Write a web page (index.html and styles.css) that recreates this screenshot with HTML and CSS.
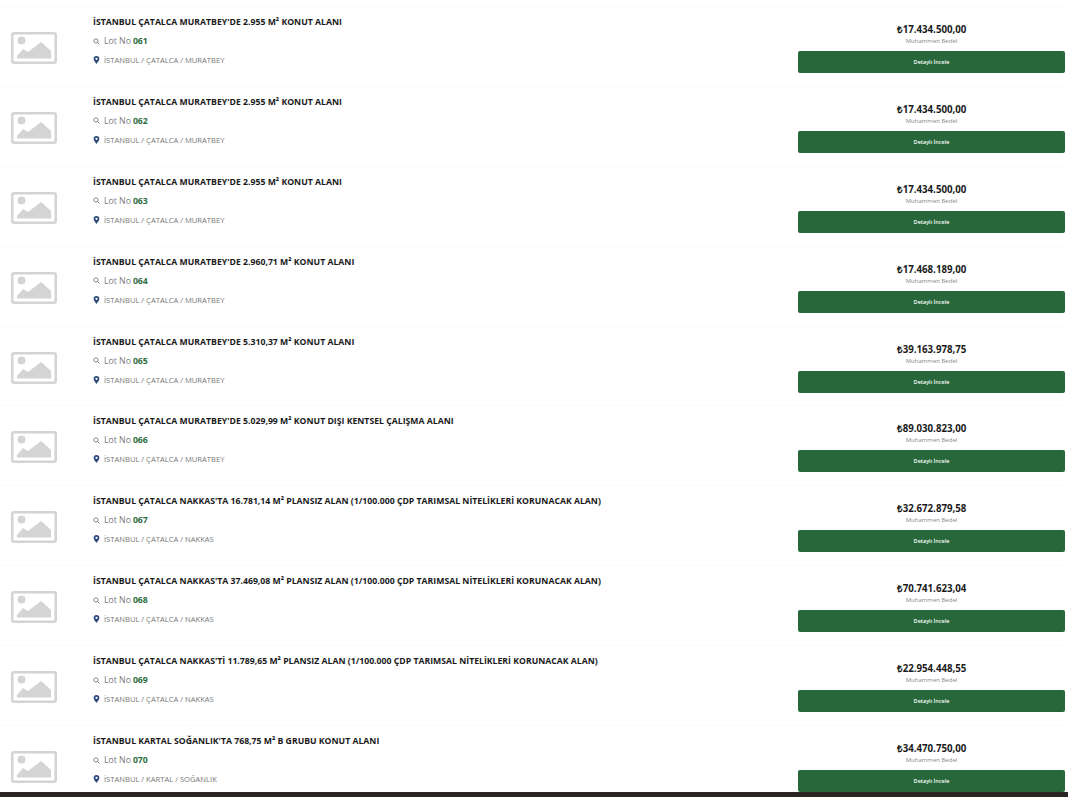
FILE: index.html
```html
<!DOCTYPE html>
<html lang="tr">

<head>
    <meta charset="utf-8">
    <title>Lot Listesi</title>
    <link rel="stylesheet" href="styles.css">
</head>

<body>
    <svg class="defs" width="0" height="0">
        <symbol id="noimg" viewBox="0 0 46 32">
            <rect x="1.250" y="1.250" width="43.500" height="29.500" rx="2" fill="#fff" stroke="#d4d4d4" stroke-width="2.500"/>
            <circle cx="10.500" cy="8.500" r="4" fill="#d4d4d4"/>
            <path d="M6 26.500v-2.500l6-7 5 3 13-10 10 9v7.500z" fill="#d4d4d4"/>
        </symbol>
        <symbol id="lens" viewBox="0 0 10 10">
            <circle cx="4.200" cy="4.200" r="3" fill="none" stroke="#6f6c86" stroke-width="1.200"/>
            <path d="M6.500 6.500L9 9" stroke="#6f6c86" stroke-width="1.400"/>
        </symbol>
        <symbol id="pin" viewBox="0 0 10 12">
            <path fill-rule="evenodd" d="M5 0a4.300 4.300 0 0 0-4.300 4.300C.7 7.300 5 12 5 12s4.300-4.700 4.300-7.700A4.300 4.300 0 0 0 5 0zm0 6a1.700 1.700 0 1 1 0-3.400A1.700 1.700 0 0 1 5 6z" fill="#2d4a7c"/>
        </symbol>
    </svg>

    <div class="lot-list">

        <div class="lot">
            <div class="thumb"><svg><use href="#noimg"/></svg></div>
            <div class="info">
                <h4>İSTANBUL ÇATALCA MURATBEY'DE 2.955 M² KONUT ALANI</h4>
                <p class="lot-no"><svg><use href="#lens"/></svg> Lot No <b>061</b></p>
                <p class="place"><svg><use href="#pin"/></svg> İSTANBUL / ÇATALCA / MURATBEY</p>
            </div>
            <div class="price">
                <strong>₺17.434.500,00</strong>
                <span>Muhammen Bedel</span>
                <a href="#">Detaylı İncele</a>
            </div>
        </div>

        <div class="lot">
            <div class="thumb"><svg><use href="#noimg"/></svg></div>
            <div class="info">
                <h4>İSTANBUL ÇATALCA MURATBEY'DE 2.955 M² KONUT ALANI</h4>
                <p class="lot-no"><svg><use href="#lens"/></svg> Lot No <b>062</b></p>
                <p class="place"><svg><use href="#pin"/></svg> İSTANBUL / ÇATALCA / MURATBEY</p>
            </div>
            <div class="price">
                <strong>₺17.434.500,00</strong>
                <span>Muhammen Bedel</span>
                <a href="#">Detaylı İncele</a>
            </div>
        </div>

        <div class="lot">
            <div class="thumb"><svg><use href="#noimg"/></svg></div>
            <div class="info">
                <h4>İSTANBUL ÇATALCA MURATBEY'DE 2.955 M² KONUT ALANI</h4>
                <p class="lot-no"><svg><use href="#lens"/></svg> Lot No <b>063</b></p>
                <p class="place"><svg><use href="#pin"/></svg> İSTANBUL / ÇATALCA / MURATBEY</p>
            </div>
            <div class="price">
                <strong>₺17.434.500,00</strong>
                <span>Muhammen Bedel</span>
                <a href="#">Detaylı İncele</a>
            </div>
        </div>

        <div class="lot">
            <div class="thumb"><svg><use href="#noimg"/></svg></div>
            <div class="info">
                <h4>İSTANBUL ÇATALCA MURATBEY'DE 2.960,71 M² KONUT ALANI</h4>
                <p class="lot-no"><svg><use href="#lens"/></svg> Lot No <b>064</b></p>
                <p class="place"><svg><use href="#pin"/></svg> İSTANBUL / ÇATALCA / MURATBEY</p>
            </div>
            <div class="price">
                <strong>₺17.468.189,00</strong>
                <span>Muhammen Bedel</span>
                <a href="#">Detaylı İncele</a>
            </div>
        </div>

        <div class="lot">
            <div class="thumb"><svg><use href="#noimg"/></svg></div>
            <div class="info">
                <h4>İSTANBUL ÇATALCA MURATBEY'DE 5.310,37 M² KONUT ALANI</h4>
                <p class="lot-no"><svg><use href="#lens"/></svg> Lot No <b>065</b></p>
                <p class="place"><svg><use href="#pin"/></svg> İSTANBUL / ÇATALCA / MURATBEY</p>
            </div>
            <div class="price">
                <strong>₺39.163.978,75</strong>
                <span>Muhammen Bedel</span>
                <a href="#">Detaylı İncele</a>
            </div>
        </div>

        <div class="lot">
            <div class="thumb"><svg><use href="#noimg"/></svg></div>
            <div class="info">
                <h4>İSTANBUL ÇATALCA MURATBEY'DE 5.029,99 M² KONUT DIŞI KENTSEL ÇALIŞMA ALANI</h4>
                <p class="lot-no"><svg><use href="#lens"/></svg> Lot No <b>066</b></p>
                <p class="place"><svg><use href="#pin"/></svg> İSTANBUL / ÇATALCA / MURATBEY</p>
            </div>
            <div class="price">
                <strong>₺89.030.823,00</strong>
                <span>Muhammen Bedel</span>
                <a href="#">Detaylı İncele</a>
            </div>
        </div>

        <div class="lot">
            <div class="thumb"><svg><use href="#noimg"/></svg></div>
            <div class="info">
                <h4>İSTANBUL ÇATALCA NAKKAS'TA 16.781,14 M² PLANSIZ ALAN (1/100.000 ÇDP TARIMSAL NİTELİKLERİ KORUNACAK ALAN)</h4>
                <p class="lot-no"><svg><use href="#lens"/></svg> Lot No <b>067</b></p>
                <p class="place"><svg><use href="#pin"/></svg> İSTANBUL / ÇATALCA / NAKKAS</p>
            </div>
            <div class="price">
                <strong>₺32.672.879,58</strong>
                <span>Muhammen Bedel</span>
                <a href="#">Detaylı İncele</a>
            </div>
        </div>

        <div class="lot">
            <div class="thumb"><svg><use href="#noimg"/></svg></div>
            <div class="info">
                <h4>İSTANBUL ÇATALCA NAKKAS'TA 37.469,08 M² PLANSIZ ALAN (1/100.000 ÇDP TARIMSAL NİTELİKLERİ KORUNACAK ALAN)</h4>
                <p class="lot-no"><svg><use href="#lens"/></svg> Lot No <b>068</b></p>
                <p class="place"><svg><use href="#pin"/></svg> İSTANBUL / ÇATALCA / NAKKAS</p>
            </div>
            <div class="price">
                <strong>₺70.741.623,04</strong>
                <span>Muhammen Bedel</span>
                <a href="#">Detaylı İncele</a>
            </div>
        </div>

        <div class="lot">
            <div class="thumb"><svg><use href="#noimg"/></svg></div>
            <div class="info">
                <h4>İSTANBUL ÇATALCA NAKKAS'Tİ 11.789,65 M² PLANSIZ ALAN (1/100.000 ÇDP TARIMSAL NİTELİKLERİ KORUNACAK ALAN)</h4>
                <p class="lot-no"><svg><use href="#lens"/></svg> Lot No <b>069</b></p>
                <p class="place"><svg><use href="#pin"/></svg> İSTANBUL / ÇATALCA / NAKKAS</p>
            </div>
            <div class="price">
                <strong>₺22.954.448,55</strong>
                <span>Muhammen Bedel</span>
                <a href="#">Detaylı İncele</a>
            </div>
        </div>

        <div class="lot">
            <div class="thumb"><svg><use href="#noimg"/></svg></div>
            <div class="info">
                <h4>İSTANBUL KARTAL SOĞANLIK'TA 768,75 M² B GRUBU KONUT ALANI</h4>
                <p class="lot-no"><svg><use href="#lens"/></svg> Lot No <b>070</b></p>
                <p class="place"><svg><use href="#pin"/></svg> İSTANBUL / KARTAL / SOĞANLIK</p>
            </div>
            <div class="price">
                <strong>₺34.470.750,00</strong>
                <span>Muhammen Bedel</span>
                <a href="#">Detaylı İncele</a>
            </div>
        </div>

    </div>

    <footer></footer>
</body>

</html>
```

FILE: styles.css
```css
html,
body {
    height: 100%;
}

body {
    margin: 0;
    background-color: white;
    font-family: "Open Sans", sans-serif;
    color: #1a1a1a;
    overflow: hidden;
    display: flex;
    flex-direction: column;
}

.defs {
    display: none;
}

.lot-list {
    flex: 1;
    overflow: hidden;
    padding-top: 6px;
}

.lot {
    display: flex;
    height: 78.9px;
    padding-right: 3px;
    border-top: 1px solid #fafafa;
}

.thumb {
    width: 93px;
    padding: 25px 0 0 11px;
    box-sizing: border-box;
}

.thumb svg {
    display: block;
    width: 46px;
    height: 32px;
}

.info {
    flex: 1;
    padding-top: 8px;
}

.info h4 {
    margin: 0;
    font-size: 8.7px;
    line-height: 14px;
    font-weight: 700;
}

.info p {
    margin: 0;
    display: flex;
    align-items: center;
    gap: 3px;
}

.lot-no {
    margin-top: 5px !important;
    font-size: 8.7px;
    line-height: 14px;
    color: #7a7a7a;
}

.lot-no svg {
    width: 7px;
    height: 7px;
    margin-right: 1px;
}

.lot-no b {
    color: #2e6b40;
    margin-left: -1px;
}

.place {
    margin-top: 5px !important;
    font-size: 7.6px;
    line-height: 14px;
    color: #777;
}

.place svg {
    width: 7px;
    height: 8px;
    margin-right: 1px;
}

.price {
    width: 267px;
    padding-top: 15px;
    text-align: center;
}

.price strong {
    display: block;
    font-size: 9.7px;
    line-height: 15px;
    font-weight: 700;
}

.price span {
    display: block;
    font-size: 6px;
    line-height: 9px;
    color: #888;
}

.price a {
    display: block;
    height: 22px;
    margin-top: 5px;
    border-radius: 2px;
    background-color: #27673a;
    color: white;
    font-size: 5.5px;
    font-weight: 600;
    line-height: 22px;
    text-decoration: none;
}

footer {
    height: 5px;
    background-color: #2a2523;
}
```
